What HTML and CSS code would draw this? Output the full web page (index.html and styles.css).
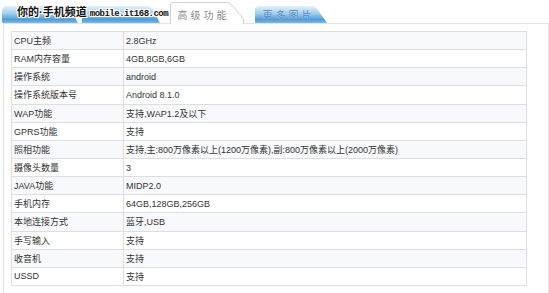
FILE: index.html
```html
<!DOCTYPE html>
<html lang="zh-CN">
<head>
<meta charset="utf-8">
<title>高级功能</title>
<link rel="stylesheet" href="styles.css">
</head>
<body>
<div class="page">
  <div class="tabs">
    <div class="tab blue t1">
      <svg class="shape" viewBox="0 0 76 17" preserveAspectRatio="none"><defs><linearGradient id="g1" x1="0" y1="0" x2="0" y2="1"><stop offset="0" stop-color="#e4f2fb"/><stop offset="0.45" stop-color="#9fcdee"/><stop offset="0.8" stop-color="#4f9bd6"/><stop offset="1" stop-color="#7fb9e4"/></linearGradient></defs><path d="M0 17 V5 Q0 0 5 0 H62 Q66 0 69 4 L76 17 Z" fill="url(#g1)"/></svg>
      <span class="label">基本参数</span>
    </div>
    <div class="tab blue t2">
      <svg class="shape" viewBox="0 0 78 17" preserveAspectRatio="none"><path d="M0 17 V5 Q0 0 5 0 H64 Q68 0 71 4 L78 17 Z" fill="url(#g1)"/></svg>
      <span class="label">外观参数</span>
    </div>
    <div class="tab active">
      <svg class="shape" viewBox="0 0 74 22" preserveAspectRatio="none"><path d="M0.5 22 V3 Q0.5 0.5 3 0.5 H57 Q60 0.5 62 3 L73.5 17 V22" fill="#fff" stroke="#d2d2d2" stroke-width="1"/></svg>
      <span class="label">高级功能</span>
    </div>
    <div class="tab blue t4">
      <svg class="shape" viewBox="0 0 72 17" preserveAspectRatio="none"><path d="M0 17 V4 Q0 0 4 0 H56 Q60 0 63 4 L72 17 Z" fill="url(#g1)"/></svg>
      <span class="label">更多图片</span>
    </div>
    <div class="watermark">你的·手机频道 <span class="wm-url">mobile.it168.com</span></div>
  </div>
  <div class="panel">
    <table class="spec">
      <tbody>
        <tr><td class="k">CPU主频</td><td class="v">2.8GHz</td></tr>
        <tr><td class="k">RAM内存容量</td><td class="v">4GB,8GB,6GB</td></tr>
        <tr><td class="k">操作系统</td><td class="v">android</td></tr>
        <tr><td class="k">操作系统版本号</td><td class="v">Android 8.1.0</td></tr>
        <tr><td class="k">WAP功能</td><td class="v">支持,WAP1.2及以下</td></tr>
        <tr><td class="k">GPRS功能</td><td class="v">支持</td></tr>
        <tr><td class="k">照相功能</td><td class="v">支持,主:800万像素以上(1200万像素),副:800万像素以上(2000万像素)</td></tr>
        <tr><td class="k">摄像头数量</td><td class="v">3</td></tr>
        <tr><td class="k">JAVA功能</td><td class="v">MIDP2.0</td></tr>
        <tr><td class="k">手机内存</td><td class="v">64GB,128GB,256GB</td></tr>
        <tr><td class="k">本地连接方式</td><td class="v">蓝牙,USB</td></tr>
        <tr><td class="k">手写输入</td><td class="v">支持</td></tr>
        <tr><td class="k">收音机</td><td class="v">支持</td></tr>
        <tr><td class="k">USSD</td><td class="v">支持</td></tr>
      </tbody>
    </table>
  </div>
</div>
</body>
</html>
```

FILE: styles.css
```css
html, body {
  margin: 0;
  padding: 0;
  background: #fff;
}
body {
  font-family: "Liberation Sans", "Noto Sans CJK SC", sans-serif;
  color: #333;
}
.page {
  width: 549px;
  height: 293px;
  overflow: hidden;
}
.tabs {
  position: relative;
  display: flex;
  align-items: flex-end;
  height: 23px;
  padding-left: 2px;
}
.tab {
  position: relative;
  display: flex;
  align-items: center;
  justify-content: center;
}
.tab .shape {
  position: absolute;
  left: 0;
  top: 0;
  width: 100%;
  height: 100%;
}
.tab .label {
  position: relative;
  font-size: 10px;
  letter-spacing: 3px;
  padding-left: 3px;
}
.blue {
  height: 17px;
}
.blue .label {
  color: #4f86bd;
  text-shadow: 0 0 1px #d6ebf9;
}
.t1 { width: 76px; }
.t2 { width: 78px; margin-left: 4px; }
.t4 { width: 72px; margin-left: 11px; }
.t4 .label { padding-right: 8px; }
.t1 .label, .t2 .label { visibility: hidden; }
.active {
  width: 74px;
  height: 22px;
  margin-left: 10px;
  margin-bottom: -1px;
  z-index: 2;
  padding-right: 10px;
  box-sizing: border-box;
}
.active .label {
  color: #8c8c8c;
  font-size: 10px;
  padding-top: 3px;
}
.watermark {
  position: absolute;
  left: 17px;
  top: 5px;
  font-size: 11px;
  font-weight: bold;
  color: #111;
  line-height: 14px;
  white-space: nowrap;
  text-shadow: 1px 0 0 #fff, -1px 0 0 #fff, 0 1px 0 #fff, 0 -1px 0 #fff, 1px 1px 0 #fff, -1px -1px 0 #fff, 1px -1px 0 #fff, -1px 1px 0 #fff;
  z-index: 3;
}
.wm-url {
  font-family: "Liberation Mono", monospace;
  font-size: 9px;
  letter-spacing: -0.5px;
}
.panel {
  position: relative;
  margin-left: 3px;
  width: 546px;
  height: 300px;
  box-sizing: border-box;
  border: 1px solid #e3e3e3;
  padding: 7px 0 0 7px;
}
.spec {
  width: 516px;
  border-collapse: collapse;
  font-size: 9px;
}
.spec td {
  height: 17.15px;
  padding: 0 2px;
  border: 1px solid #dedede;
  white-space: nowrap;
  vertical-align: middle;
}
.spec tr:nth-child(odd) td {
  background: #f8f9fc;
}
.spec .k {
  width: 107px;
}
```
